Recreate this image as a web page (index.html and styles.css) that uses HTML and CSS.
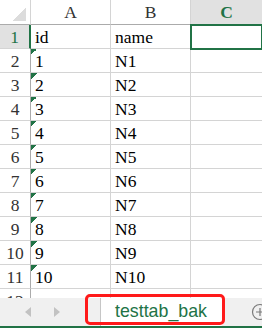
FILE: index.html
```html
<!DOCTYPE html>
<html>
<head>
<meta charset="utf-8">
<link rel="stylesheet" href="styles.css">
</head>
<body>
<div class="app">
  <div class="sheet">
    <div class="c hc corner"></div>
    <div class="c hc">A</div>
    <div class="c hc">B</div>
    <div class="c hc sel last">C</div>

    <div class="c rh rsel">1</div>
    <div class="c">id</div>
    <div class="c">name</div>
    <div class="c last active"></div>

    <div class="c rh">2</div><div class="c t">1</div><div class="c">N1</div><div class="c last"></div>
    <div class="c rh">3</div><div class="c t">2</div><div class="c">N2</div><div class="c last"></div>
    <div class="c rh">4</div><div class="c t">3</div><div class="c">N3</div><div class="c last"></div>
    <div class="c rh">5</div><div class="c t">4</div><div class="c">N4</div><div class="c last"></div>
    <div class="c rh">6</div><div class="c t">5</div><div class="c">N5</div><div class="c last"></div>
    <div class="c rh">7</div><div class="c t">6</div><div class="c">N6</div><div class="c last"></div>
    <div class="c rh">8</div><div class="c t">7</div><div class="c">N7</div><div class="c last"></div>
    <div class="c rh">9</div><div class="c t">8</div><div class="c">N8</div><div class="c last"></div>
    <div class="c rh">10</div><div class="c t">9</div><div class="c">N9</div><div class="c last"></div>
    <div class="c rh">11</div><div class="c t">10</div><div class="c">N10</div><div class="c last"></div>
    <div class="c rh">12</div><div class="c"></div><div class="c"></div><div class="c last"></div>
  </div>
  <div class="tabs">
    <div class="nav">
      <span class="arr left"></span>
      <span class="arr right"></span>
    </div>
    <div class="tab">testtab_bak</div>
    <div class="mark"></div>
    <svg class="plus" width="18" height="18" viewBox="0 0 18 18">
      <circle cx="9" cy="9" r="7.5" fill="none" stroke="#7a7a7a" stroke-width="1.2"/>
      <path d="M9 5v8M5 9h8" stroke="#7a7a7a" stroke-width="1.2"/>
    </svg>
  </div>
</div>
</body>
</html>
```

FILE: styles.css
```css
html, body {
  margin: 0;
  padding: 0;
  background: #fff;
}
body {
  width: 262px;
  height: 328px;
  overflow: hidden;
}
.app {
  display: flex;
  flex-direction: column;
  width: 262px;
  height: 328px;
}
.sheet {
  display: grid;
  grid-template-columns: 31px 80px 80px 1fr;
  grid-template-rows: 25px;
  grid-auto-rows: 24px;
  height: 298px;
  overflow: hidden;
  flex: none;
}
.c {
  box-sizing: border-box;
  border-right: 1px solid #d4d4d4;
  border-bottom: 1px solid #d4d4d4;
  display: flex;
  align-items: flex-end;
  padding: 0 3px 1px 4px;
  font-family: "Liberation Serif", serif;
  font-size: 17.5px;
  line-height: 20px;
  color: #000;
  white-space: nowrap;
  overflow: hidden;
}
.c.last {
  border-right: none;
}
.hc {
  border-bottom-color: #ababab;
  justify-content: center;
  align-items: center;
  padding: 0;
  color: #333;
}
.corner {
  background: linear-gradient(315deg, #dcdcdc 50%, transparent 50%) no-repeat right 4px bottom 3px / 14px 14px;
  border-right-color: #d4d4d4;
}
.hc.sel {
  background: #e1e1e1;
  color: #217346;
  font-weight: bold;
}
.rh {
  border-right-color: #ababab;
  justify-content: center;
  padding: 0 0 1px 0;
  color: #333;
}
.rh.rsel {
  background: #e1e1e1;
  color: #217346;
  border-right: 2px solid #217346;
}
.active {
  position: relative;
  z-index: 1;
  outline: 2px solid #217346;
  outline-offset: -1px;
}
.t {
  background: linear-gradient(135deg, #217346 50%, transparent 50%) no-repeat 0 0 / 6px 6px;
}
.tabs {
  position: relative;
  display: flex;
  align-items: stretch;
  height: 28px;
  background: #f0f0f0;
  border-bottom: 2px solid #217346;
  flex: none;
}
.nav {
  width: 100px;
  flex: none;
  display: flex;
  align-items: center;
  padding-left: 25px;
  gap: 23px;
  box-sizing: border-box;
}
.arr {
  width: 0;
  height: 0;
  border-top: 5px solid transparent;
  border-bottom: 5px solid transparent;
}
.arr.left {
  border-right: 6px solid #c2c2c2;
}
.arr.right {
  border-left: 6px solid #c2c2c2;
}
.tab {
  width: 122px;
  flex: none;
  box-sizing: border-box;
  border-left: 1px solid #c6c6c6;
  background: #fff;
  color: #217346;
  font-family: "Liberation Sans", Arial, sans-serif;
  font-size: 17.8px;
  display: flex;
  align-items: center;
  padding-left: 14px;
  padding-bottom: 2px;
}
.mark {
  position: absolute;
  left: 85px;
  top: -4px;
  width: 140px;
  height: 31px;
  box-sizing: border-box;
  border: 3px solid #ff1a1a;
  border-radius: 5px;
}
.plus {
  flex: none;
  align-self: center;
  margin-left: auto;
  margin-right: -7px;
}
```
